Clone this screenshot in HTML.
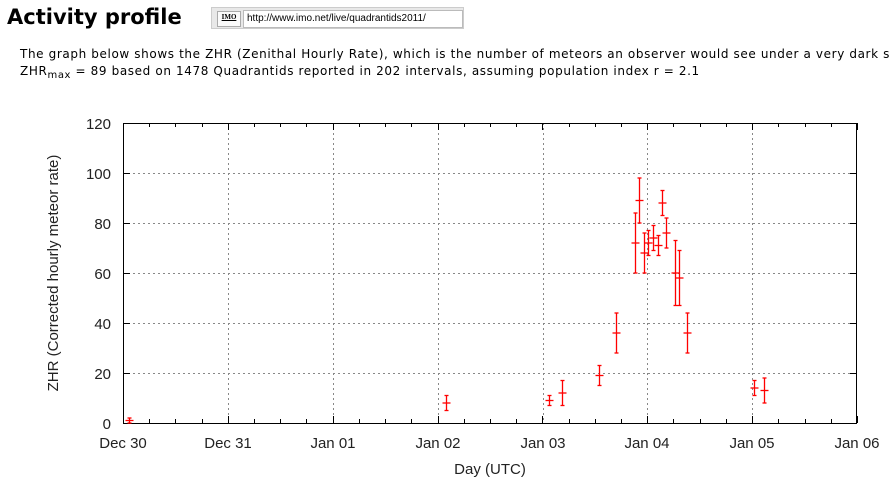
<!DOCTYPE html>
<html><head><meta charset="utf-8"><style>
body{margin:0;background:#fff;width:892px;height:486px;overflow:hidden;position:relative;font-family:"DejaVu Sans","Liberation Sans",sans-serif}
h1{position:absolute;left:7px;top:5px;margin:0;font:bold 21px "DejaVu Sans","Liberation Sans",sans-serif;letter-spacing:0px}
.url{position:absolute;left:211px;top:7px;width:253px;height:22px;background:#e8e8e8;border:1px solid #ccc;box-sizing:border-box}
.url .ic{position:absolute;left:5px;top:3px;width:22px;height:14px;background:#fafafa;border:1px solid #aaa;font:bold 7px "Liberation Serif",serif;text-align:center;line-height:10px;text-decoration:underline}
.url .tx{position:absolute;left:31px;top:2px;right:0;height:16px;background:#fff;border:1px solid #bbb;font:10px "Liberation Sans",sans-serif;line-height:16px;padding-left:3px}
.p{position:absolute;left:20px;font-size:12px;white-space:nowrap;color:#000;letter-spacing:0.62px}
</style></head><body>
<h1>Activity profile</h1>
<div class="url"><div class="ic">IMO</div><div class="tx">http://www.imo.net/live/quadrantids2011/</div></div>
<div class="p" style="top:47px">The graph below shows the ZHR (Zenithal Hourly Rate), which is the number of meteors an observer would see under a very dark s</div>
<div class="p" style="top:64px">ZHR<sub style="font-size:10px;vertical-align:-3px">max</sub> = 89 based on 1478 Quadrantids reported in 202 intervals, assuming population index r = 2.1</div>
<svg width="892" height="486" style="position:absolute;left:0;top:0" font-family="Liberation Sans,sans-serif" font-size="15">
<g stroke="#888" stroke-dasharray="2,3" stroke-width="1">
<line x1="123" y1="373.5" x2="857" y2="373.5"/><line x1="123" y1="323.5" x2="857" y2="323.5"/><line x1="123" y1="273.5" x2="857" y2="273.5"/><line x1="123" y1="223.5" x2="857" y2="223.5"/><line x1="123" y1="173.5" x2="857" y2="173.5"/>
<line x1="228.5" y1="123" x2="228.5" y2="423"/><line x1="333.5" y1="123" x2="333.5" y2="423"/><line x1="438.5" y1="123" x2="438.5" y2="423"/><line x1="543.5" y1="123" x2="543.5" y2="423"/><line x1="647.5" y1="123" x2="647.5" y2="423"/><line x1="752.5" y1="123" x2="752.5" y2="423"/>
</g>
<rect x="123.5" y="123.5" width="733" height="300" fill="none" stroke="#000"/>
<g stroke="#000" id="tk"></g>
<g text-anchor="end" fill="#222">
<text x="111" y="429">0</text><text x="111" y="379">20</text><text x="111" y="329">40</text><text x="111" y="279">60</text><text x="111" y="229">80</text><text x="111" y="179">100</text><text x="111" y="129">120</text>
</g>
<g text-anchor="middle" fill="#222">
<text x="123" y="448">Dec 30</text><text x="228" y="448">Dec 31</text><text x="333" y="448">Jan 01</text><text x="438" y="448">Jan 02</text><text x="543" y="448">Jan 03</text><text x="647" y="448">Jan 04</text><text x="752" y="448">Jan 05</text><text x="857" y="448">Jan 06</text>
<text x="490" y="474">Day (UTC)</text>
<text transform="translate(58,273) rotate(-90)">ZHR (Corrected hourly meteor rate)</text>
</g>
<g id="d" stroke="red" stroke-width="1.3"></g>
</svg>
<script>
var d=[[129,1,1],[446,8,3],[549,9,2],[562,12,5],[599,19,4],[616,36,8],[635,72,12],[639,89,9],[644,68,8],[648,72,5],[653,74,5],[658,71,4],[662,88,5],[666,76,6],[675,60,13],[679,58,11],[687,36,8],[754,14,3],[764,13,5]];
var s='';d.forEach(function(p){var x=p[0]+.5,y=423-p[1]*2.5,t=423-(p[1]+p[2])*2.5,b=423-(p[1]-p[2])*2.5;
s+='<line x1="'+x+'" y1="'+t+'" x2="'+x+'" y2="'+b+'"/><line x1="'+(x-2)+'" y1="'+t+'" x2="'+(x+2)+'" y2="'+t+'"/><line x1="'+(x-2)+'" y1="'+b+'" x2="'+(x+2)+'" y2="'+b+'"/><line x1="'+(x-4)+'" y1="'+y+'" x2="'+(x+4)+'" y2="'+y+'"/>';});
document.getElementById('d').innerHTML=s;
var k='';for(var i=0;i<=28;i++){var x=Math.round(123+i*104.857/4)+.5,l=i%4?4:7;k+='<line x1="'+x+'" y1="423" x2="'+x+'" y2="'+(423-l)+'"/><line x1="'+x+'" y1="123" x2="'+x+'" y2="'+(123+l)+'"/>';}
for(var j=0;j<=6;j++){var y=423-j*50+.5;k+='<line x1="123" y1="'+y+'" x2="130" y2="'+y+'"/><line x1="850" y1="'+y+'" x2="857" y2="'+y+'"/>';}
document.getElementById('tk').innerHTML=k;
</script>
</body></html>
